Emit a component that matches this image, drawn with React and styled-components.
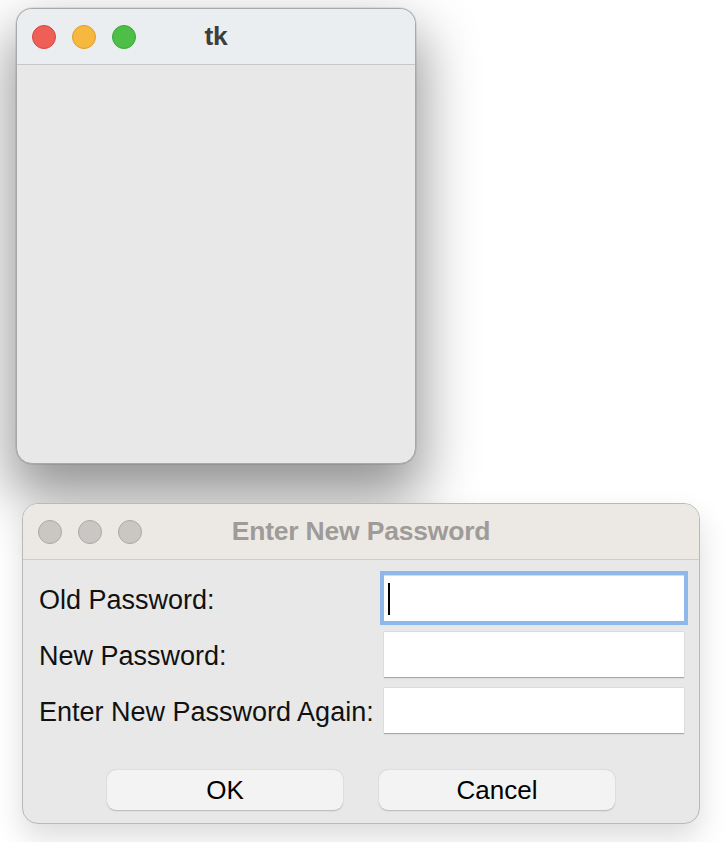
import React from 'react';
import styled, { createGlobalStyle } from 'styled-components';

const GlobalStyle = createGlobalStyle`
  html, body {
    margin: 0;
    padding: 0;
    background: #ffffff;
    font-family: "Liberation Sans", Arial, sans-serif;
  }
`;

const lights = {
  red: { fill: '#ee5f57', edge: '#d4483f' },
  yellow: { fill: '#f7b83f', edge: '#db9e2e' },
  green: { fill: '#4dbe48', edge: '#3aa737' },
  idle: { fill: '#c9c6c3', edge: '#aaa7a4' },
};

const Desktop = styled.div`
  width: 726px;
  height: 842px;
  overflow: hidden;
  display: flex;
  flex-direction: column;
  align-items: flex-start;
  padding-top: 8px;
  box-sizing: border-box;
`;

const Window = styled.div`
  margin-left: ${(p) => p.left}px;
  margin-top: ${(p) => p.top || 0}px;
  width: ${(p) => p.width}px;
  height: ${(p) => p.height}px;
  box-sizing: border-box;
  display: flex;
  flex-direction: column;
  border-radius: 16px;
  overflow: hidden;
  border: 1px solid ${(p) => (p.active ? '#a9a9a9' : '#b9b9b9')};
  background: #e8e8e8;
  box-shadow: ${(p) =>
    p.active
      ? '0 28px 56px 6px rgba(0,0,0,0.42), 0 0 0 0.5px rgba(0,0,0,0.15)'
      : '0 14px 30px rgba(0,0,0,0.14)'};
`;

const TitleBar = styled.div`
  position: relative;
  flex: 0 0 55px;
  display: flex;
  align-items: center;
  justify-content: center;
  background: ${(p) => (p.active ? '#ebeef1' : '#ece9e5')};
  border-bottom: 1px solid ${(p) => (p.active ? '#c6c6c6' : '#cfccc9')};
`;

const Lights = styled.div`
  position: absolute;
  left: ${(p) => p.inset}px;
  top: 0;
  bottom: 0;
  display: flex;
  align-items: center;
  gap: 16px;
`;

const Light = styled.span`
  width: 24px;
  height: 24px;
  border-radius: 50%;
  box-sizing: border-box;
  background: ${(p) => lights[p.kind].fill};
  border: 1px solid ${(p) => lights[p.kind].edge};
`;

const Title = styled.span`
  font-size: 26.5px;
  font-weight: 700;
  color: ${(p) => (p.active ? '#3e3e3e' : '#9e9b98')};
  letter-spacing: -0.2px;
`;

const DialogBody = styled.div`
  flex: 1;
  display: flex;
  flex-direction: column;
  padding: 15px 16px 13px 16px;
`;

const Form = styled.div`
  display: grid;
  grid-template-columns: 345px 300px;
  row-gap: 10px;
  align-items: center;
`;

const Label = styled.span`
  font-size: 27px;
  color: #111;
  padding-top: 5px;
`;

const Entry = styled.div`
  height: 46px;
  box-sizing: border-box;
  background: #ffffff;
  border-top: 1px solid #dcdcdc;
  box-shadow: 0 1px 1px rgba(0, 0, 0, 0.28);
  display: flex;
  align-items: center;
  padding-left: 4px;
  outline: ${(p) => (p.focused ? '4px solid #8db8ea' : 'none')};
`;

const Caret = styled.span`
  width: 2px;
  height: 32px;
  background: #000;
`;

const Buttons = styled.div`
  margin-top: auto;
  display: flex;
  justify-content: center;
  gap: 36px;
`;

const Button = styled.button`
  width: 236px;
  height: 40px;
  border: none;
  border-radius: 9px;
  background: #f3f3f3;
  box-shadow: 0 0.5px 1.5px rgba(0, 0, 0, 0.22);
  font-family: "Liberation Sans", Arial, sans-serif;
  font-size: 26px;
  color: #000;
  padding: 0;
`;

const fields = ['Old Password:', 'New Password:', 'Enter New Password Again:'];

export default function App() {
  return (
    <>
      <GlobalStyle />
      <Desktop>
        <Window left={16} width={400} height={456} active>
          <TitleBar active>
            <Lights inset={15}>
              <Light kind="red" />
              <Light kind="yellow" />
              <Light kind="green" />
            </Lights>
            <Title active>tk</Title>
          </TitleBar>
        </Window>
        <Window left={22} top={39} width={678} height={321}>
          <TitleBar>
            <Lights inset={15}>
              <Light kind="idle" />
              <Light kind="idle" />
              <Light kind="idle" />
            </Lights>
            <Title>Enter New Password</Title>
          </TitleBar>
          <DialogBody>
            <Form>
              {fields.map((f, i) => (
                <React.Fragment key={f}>
                  <Label>{f}</Label>
                  <Entry focused={i === 0}>{i === 0 && <Caret />}</Entry>
                </React.Fragment>
              ))}
            </Form>
            <Buttons>
              <Button>OK</Button>
              <Button>Cancel</Button>
            </Buttons>
          </DialogBody>
        </Window>
      </Desktop>
    </>
  );
}
